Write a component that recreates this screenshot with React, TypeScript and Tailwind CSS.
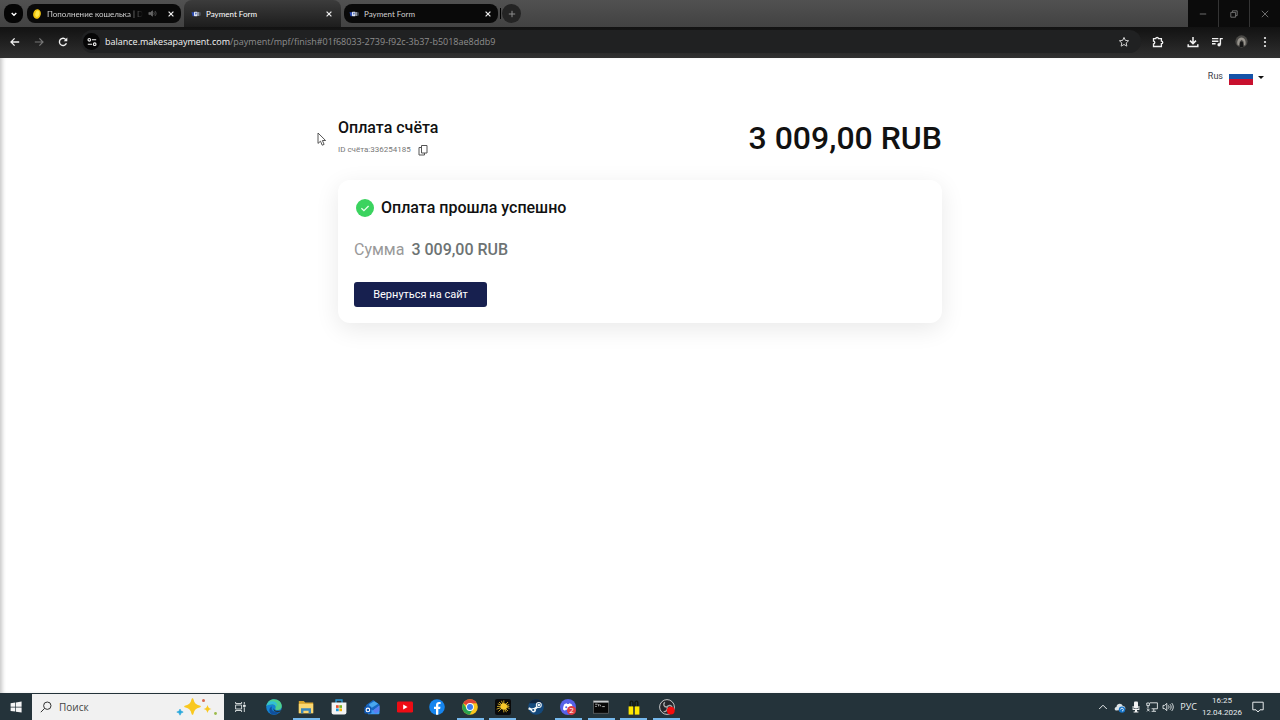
import { useState } from "react";
import type { ReactNode } from "react";

type TabInfo = { id: number; title: string; kind: "coin" | "pay"; audio?: boolean };

const TABS: TabInfo[] = [
  { id: 1, title: "Пополнение кошелька | D", kind: "coin", audio: true },
  { id: 2, title: "Payment Form", kind: "pay" },
  { id: 3, title: "Payment Form", kind: "pay" },
];

function Favicon({ kind }: { kind: TabInfo["kind"] }) {
  if (kind === "coin") {
    return (
      <svg viewBox="0 0 10 10" className="size-[10px] shrink-0">
        <ellipse cx="5" cy="5" rx="3.8" ry="4.9" fill="#f2c50f" transform="rotate(12 5 5)" />
        <ellipse cx="5.3" cy="4.7" rx="2" ry="3.2" fill="#ffe84a" transform="rotate(12 5 5)" />
      </svg>
    );
  }
  return (
    <svg viewBox="0 0 10 10" className="size-[10px] shrink-0">
      <path d="M0.5 3.2h2.6v4H1.6z" fill="#2c4cb4" />
      <rect x="3" y="2.8" width="3.6" height="4.4" rx="0.6" fill="#dfe6f5" />
      <path d="M4 3.8h1.8L4.9 6.3z" fill="#3350a8" />
      <rect x="6.8" y="3" width="1.6" height="4" fill="#8b93a0" />
      <rect x="8.7" y="3.4" width="0.9" height="3.2" fill="#596270" />
    </svg>
  );
}

function CloseIcon() {
  return (
    <svg viewBox="0 0 8 8" className="size-2" stroke="currentColor" strokeWidth="1.2">
      <path d="M1.6 1.6l4.8 4.8M6.4 1.6L1.6 6.4" />
    </svg>
  );
}

function Tab({ tab, active, onSelect }: { tab: TabInfo; active: boolean; onSelect: () => void }) {
  return (
    <div
      className={
        active
          ? "flex h-[27px] w-[157px] shrink-0 items-center rounded-t-lg bg-linear-to-b from-[#3c3c3c] to-[#1d1d1d] pr-[8px] pl-[7px] text-white"
          : "mt-[4px] mb-[4px] flex h-[19px] w-[154px] shrink-0 items-center rounded-lg bg-[#090909] pr-[6px] pl-[5px] text-[#d0d0d0]"
      }
    >
      <button type="button" onClick={onSelect} className="flex min-w-0 flex-1 items-center gap-[5px]">
        <Favicon kind={tab.kind} />
        <span className={tab.audio ? "mask-r-from-85% text-left whitespace-nowrap" : "whitespace-nowrap"}>
          {tab.title}
        </span>
        {tab.audio && (
          <svg viewBox="0 0 10 10" className="size-[9px] shrink-0" fill="none" stroke="#666" strokeWidth="0.9">
            <path d="M1 3.8v2.4h1.8L5 8V2L2.8 3.8z" fill="#666" />
            <path d="M6.3 3.5c.9.9.9 2.1 0 3M7.7 2.3c1.6 1.6 1.6 3.8 0 5.4" />
          </svg>
        )}
      </button>
      <button type="button" aria-label="Закрыть вкладку" className="text-[#eeeeee]">
        <CloseIcon />
      </button>
    </div>
  );
}

function TabStrip() {
  const [current, setCurrent] = useState(2);

  return (
    <div className="flex h-[27px] items-start bg-linear-to-b from-[#515151] to-[#424242] pl-[4px] font-[Lato,sans-serif] text-[8px]">
      <button
        type="button"
        aria-label="Поиск вкладок"
        className="mt-[4px] mr-[4px] flex size-[19px] items-center justify-center rounded-lg bg-[#050505] text-white"
      >
        <svg viewBox="0 0 8 8" className="size-2" fill="none" stroke="currentColor" strokeWidth="1.4">
          <path d="M1.7 2.9L4 5.2l2.3-2.3" />
        </svg>
      </button>
      <div className="flex min-w-0 items-start gap-[3px]">
        {TABS.map((t) => (
          <Tab key={t.id} tab={t} active={t.id === current} onSelect={() => setCurrent(t.id)} />
        ))}
      </div>
      <span className="mt-[8px] ml-[2px] h-[11px] w-px bg-black" />
      <button
        type="button"
        aria-label="Новая вкладка"
        className="mt-[4px] ml-px flex size-[19px] items-center justify-center rounded-full bg-[#242424] text-[#8d8d8d]"
      >
        <svg viewBox="0 0 8 8" className="size-2" stroke="currentColor">
          <path d="M4 .8v6.4M.8 4h6.4" />
        </svg>
      </button>
      <div className="ml-auto flex h-[27px] gap-px bg-[#343434] text-[#858585]">
        <button type="button" aria-label="Свернуть" className="flex w-[30px] items-center justify-center bg-[#0b0b0b]">
          <svg viewBox="0 0 8 8" className="size-2" stroke="currentColor" strokeWidth="0.8">
            <path d="M.8 4h6.4" />
          </svg>
        </button>
        <button type="button" aria-label="Развернуть" className="flex w-[30px] items-center justify-center bg-[#0b0b0b]">
          <svg viewBox="0 0 8 8" className="size-2" fill="none" stroke="currentColor" strokeWidth="0.8">
            <path d="M.8 2.4h4.8v4.8H.8zM2.4 2.2V.8h4.8v4.8H5.8" />
          </svg>
        </button>
        <button type="button" aria-label="Закрыть" className="flex w-[30px] items-center justify-center bg-[#0b0b0b]">
          <svg viewBox="0 0 8 8" className="size-2" stroke="currentColor" strokeWidth="0.8">
            <path d="M.8.8l6.4 6.4M7.2.8L.8 7.2" />
          </svg>
        </button>
      </div>
    </div>
  );
}

function Toolbar() {
  return (
    <div className="flex h-[31px] items-center bg-linear-to-b from-[#121212] to-[#303030] pr-[10px] pb-[2px] pl-[9px] text-[#f1f1f1]">
      <div className="flex w-[72px] items-center gap-[12px]">
        <button type="button" aria-label="Назад">
          <svg viewBox="0 0 12 12" className="size-3" fill="none" stroke="currentColor" strokeWidth="1.3">
            <path d="M10.2 6H2.2M5.6 2.4L2 6l3.6 3.6" />
          </svg>
        </button>
        <button type="button" aria-label="Вперёд" className="text-[#777777]">
          <svg viewBox="0 0 12 12" className="size-3" fill="none" stroke="currentColor" strokeWidth="1.2">
            <path d="M1.8 6h8M6.4 2.4L10 6 6.4 9.6" />
          </svg>
        </button>
        <button type="button" aria-label="Обновить">
          <svg viewBox="0 0 12 12" className="size-3" fill="none" stroke="currentColor" strokeWidth="1.4">
            <path d="M9.4 7.2A3.6 3.6 0 1 1 8.8 3.6" />
            <path d="M10.3 1.6v3.6H6.7z" fill="currentColor" stroke="none" />
          </svg>
        </button>
      </div>
      <div className="flex h-[23px] min-w-0 flex-1 items-center rounded-full bg-[#202122] pr-[11px] pl-[2px]">
        <button
          type="button"
          aria-label="Сведения о сайте"
          className="mr-[5px] flex size-[17px] shrink-0 items-center justify-center rounded-full bg-[#060606]"
        >
          <svg viewBox="0 0 10 10" className="size-[10px]" fill="none" stroke="currentColor" strokeWidth="1.1">
            <circle cx="2.3" cy="2.8" r="1.3" />
            <path d="M4.9 2.8h4.3M.8 7.2h4.3" />
            <circle cx="7.7" cy="7.2" r="1.3" />
          </svg>
        </button>
        <a href="#" className="flex-1 truncate text-[9px] leading-3 text-[#8e8e8e]">
          <span className="text-[#f4f4f4]">balance.makesapayment.com</span>
          /payment/mpf/finish#01f68033-2739-f92c-3b37-b5018ae8ddb9
        </a>
        <button type="button" aria-label="Добавить в закладки" className="text-[#d0d0d0]">
          <svg viewBox="0 0 12 12" className="size-3" fill="none" stroke="currentColor">
            <path d="M6 1.4l1.35 3 3.25.35-2.4 2.2.65 3.2L6 8.5l-2.85 1.65.65-3.2-2.4-2.2 3.25-.35z" />
          </svg>
        </button>
      </div>
      <div className="flex items-center gap-[12px] pl-[11px]">
        <button type="button" aria-label="Расширения" className="mr-[11px]">
          <svg viewBox="0 0 12 12" className="size-3" fill="none" stroke="currentColor" strokeWidth="1.3">
            <path d="M1.5 2.6h2.3c0-1.6 2.6-1.6 2.6 0h3v2.6c1.8 0 1.8 2.4 0 2.4v2.9H1.5V8c1.7-.2 1.7-2.6 0-2.8z" />
          </svg>
        </button>
        <button type="button" aria-label="Загрузки">
          <svg viewBox="0 0 12 12" className="size-3" fill="none" stroke="currentColor" strokeWidth="1.5">
            <path d="M6 1v6.2M3 4.6l3 3 3-3M1.2 8.2v2.4h9.6V8.2" />
          </svg>
        </button>
        <button type="button" aria-label="Управление медиа">
          <svg viewBox="0 0 12 12" className="size-3" fill="none" stroke="currentColor" strokeWidth="1.4">
            <path d="M1 2.6h6.4M1 5.2h6.4M1 7.8h3.6M9.4 8.6V2.6h2.4" />
            <circle cx="8.1" cy="8.8" r="1.7" fill="currentColor" stroke="none" />
          </svg>
        </button>
        <button type="button" aria-label="Профиль">
          <svg viewBox="0 0 14 14" className="size-[13px]">
            <circle cx="7" cy="7" r="6.6" fill="#4a4946" />
            <path d="M3 11c-1.6-4 .4-8.4 4-8.4s5.4 4.4 4 8.4l-2 .4.4-4.2L7.2 5 5 7.2l.4 4z" fill="#99958e" />
            <path d="M5.2 13c-.8-3 0-6 1.8-6s2.6 3 1.8 6z" fill="#161616" />
          </svg>
        </button>
        <button type="button" aria-label="Меню" className="flex w-[10px] justify-center">
          <svg viewBox="0 0 4 12" className="h-3 w-1" fill="currentColor">
            <circle cx="2" cy="2" r="1.1" />
            <circle cx="2" cy="6" r="1.1" />
            <circle cx="2" cy="10" r="1.1" />
          </svg>
        </button>
      </div>
    </div>
  );
}

function PaymentPage() {
  return (
    <main className="relative flex-1 bg-white font-[Roboto,sans-serif] shadow-[inset_4px_0_4px_-2px_#c4c4c4]">
      <div className="flex h-[38px] items-center justify-end pr-[16px]">
        <button type="button" className="flex items-center text-[9px] text-[#3c4048]">
          Rus
          <svg viewBox="0 0 24 14" className="mt-[2px] ml-[6px] h-[14px] w-6">
            <path d="M0 0h24v4H0z" fill="#ffffff" />
            <path d="M0 3h24v6H0z" fill="#1553a8" />
            <path d="M0 8h24v6H0z" fill="#c8102e" />
          </svg>
          <svg viewBox="0 0 6 3" className="ml-[5px] h-[3px] w-[6px]" fill="#111111">
            <path d="M0 0h6L3 3z" />
          </svg>
        </button>
      </div>

      <div className="mx-auto w-full max-w-[604px] pt-[20px]">
        <header className="flex items-center justify-between">
          <div>
            <h1 className="text-[16px] leading-6 font-medium text-[#111111]">Оплата счёта</h1>
            <div className="mt-[2px] mb-[2px] flex h-4 items-center gap-[7px] text-[8px] text-[#777777]">
              <span>ID счёта:336254185</span>
              <button type="button" aria-label="Скопировать">
                <svg viewBox="0 0 10 12" className="h-3 w-[10px]" fill="none" stroke="#555555">
                  <path d="M3.5 1.5H9V9H3.5z" />
                  <path d="M3.5 3.5H1V11h5.5V9" />
                </svg>
              </button>
            </div>
          </div>
          <p className="text-[32px] leading-10 font-medium text-[#111111]">3 009,00 RUB</p>
        </header>

        <section className="mt-[20px] rounded-xl bg-white px-4 pt-[16px] pb-[16px] shadow-[0_6px_24px_rgba(0,0,0,0.09)]">
          <h2 className="flex h-6 items-center text-[16px] leading-6 font-medium text-[#111111]">
            <svg viewBox="0 0 18 18" className="mr-[7px] ml-[2px] size-[18px]">
              <circle cx="9" cy="9" r="9" fill="#3bd35f" />
              <path d="M5.4 9.3l2.5 2.4 4.7-4.7" fill="none" stroke="#e9ffed" strokeWidth="1.3" />
            </svg>
            Оплата прошла успешно
          </h2>
          <p className="mt-[18px] flex gap-[7px] text-[16px] leading-6 text-[#999999]">
            Сумма <span className="font-medium text-[#6d7373]">3 009,00 RUB</span>
          </p>
          <button
            type="button"
            className="mt-[20px] block h-[25px] w-[133px] rounded-[3px] bg-[#17204f] pt-px text-[11px] text-white"
          >
            Вернуться на сайт
          </button>
        </section>
      </div>

      <svg viewBox="0 0 10 15" className="absolute top-[74px] left-[317px] h-[15px] w-[10px]">
        <path
          d="M1 1v10.4l2.5-2.2 1.7 4 1.9-.8-1.7-3.9h3.2z"
          fill="#ffffff"
          stroke="#444444"
          strokeWidth="0.9"
        />
      </svg>
    </main>
  );
}

type TaskbarApp = { name: string; open?: boolean; icon: ReactNode };

const APPS: TaskbarApp[] = [
  {
    name: "Edge",
    icon: (
      <>
        <circle cx="8" cy="8" r="7.8" fill="#1583d2" />
        <path d="M.4 7C1.2 2.6 4.4.2 8 .2c4.6 0 7.8 3.2 7.8 6.8 0 2.6-2 4-4.2 4-2 0-2.8-.8-2.2-1.6C10.4 7.6 9 5.2 6.2 5.2 3.4 5.2 1.2 6 .4 7z" fill="#4fd08d" />
        <path d="M.4 7C1.4 3.2 4.2 1.8 7 2.2c3.4.4 4.8 3 3.8 5.4C10 5.8 8.4 5 6.4 5 3.8 5 1.4 5.8.4 7z" fill="#32bfd8" />
        <path d="M6 7.4c-1.6 3.6 1.6 7 8 4.6-2 3.4-6 4.4-8.6 3C2.2 12.8 3 8.4 6 7.4z" fill="#10509e" />
        <path d="M7.6 9c.4 2.6 3.6 3.8 7.6 1.9l-.9 1.6c-4 1.4-7.4 0-6.7-3.5z" fill="#24333a" />
      </>
    ),
  },
  {
    name: "Проводник",
    open: true,
    icon: (
      <>
        <path d="M.8 2h5l1.4 1.6h8v10.6H.8z" fill="#d9a52d" />
        <path d="M.8 4.8h14.4v9.4H.8z" fill="#fbd771" />
        <path d="M3 9.2h10v5h-2.4v-2.4H5.4v2.4H3z" fill="#3a86bd" />
      </>
    ),
  },
  {
    name: "Microsoft Store",
    icon: (
      <>
        <path d="M5 4V1h6v3" fill="none" stroke="#2b9bd8" strokeWidth="1.3" />
        <path d="M.6 3.6h14.8v9.8a2 2 0 0 1-2 2H2.6a2 2 0 0 1-2-2z" fill="#f4f4f4" />
        <path d="M5 6.2h2.7v2.7H5z" fill="#e8502d" />
        <path d="M8.3 6.2H11v2.7H8.3z" fill="#78b322" />
        <path d="M5 9.5h2.7v2.7H5z" fill="#1a9be0" />
        <path d="M8.3 9.5H11v2.7H8.3z" fill="#f4b400" />
      </>
    ),
  },
  {
    name: "Outlook",
    icon: (
      <>
        <path d="M2.2 6L9.2 1l6.2 4.4v8.8H2.6z" fill="#1767c2" />
        <path d="M5 5.2l5.2-3 4 2.6-7.6 4.6z" fill="#49a7ee" />
        <path d="M3 8l6 3.4 6.4-4.8v7.6a1 1 0 0 1-1 1H4z" fill="#3f9af2" />
        <path d="M9 11.4l6.4-4.8v5.2l-4 3z" fill="#5b7df0" />
        <rect x="0.4" y="7.4" width="7" height="7" rx="1.2" fill="#0f58b4" />
        <circle cx="3.9" cy="10.9" r="1.8" fill="none" stroke="#ffffff" strokeWidth="1.1" />
      </>
    ),
  },
  {
    name: "YouTube",
    icon: (
      <>
        <rect x="0" y="2.6" width="16" height="11" rx="1.4" fill="#ee0c14" />
        <path d="M6.2 5.6v5l4.4-2.5z" fill="#ffffff" />
      </>
    ),
  },
  {
    name: "Facebook",
    icon: (
      <>
        <circle cx="8" cy="8" r="7.8" fill="#1685ee" />
        <path d="M7 15.7V10H5V7.8h2V6c0-2 1.2-3.1 3-3.1l1.6.1v2h-1c-1 0-1.3.5-1.3 1.2v1.6h2.2L11.1 10H9.3v5.7z" fill="#ffffff" />
      </>
    ),
  },
  {
    name: "Chrome",
    open: true,
    icon: (
      <>
        <circle cx="8" cy="8" r="7.8" fill="#f8c51c" />
        <path d="M8 8L1.2 4.2A7.8 7.8 0 0 1 14.8 4.2L8 4.4z" fill="#df4437" />
        <path d="M1.2 4.2A7.8 7.8 0 0 0 7.6 15.8L11 9.8 8 8 4.8 9.8z" fill="#2aa450" />
        <circle cx="8" cy="8" r="3.9" fill="#ffffff" />
        <circle cx="8" cy="8" r="3" fill="#3c7df0" />
      </>
    ),
  },
  {
    name: "Sun",
    open: true,
    icon: (
      <>
        <rect width="16" height="16" rx="2" fill="#090909" />
        <circle cx="8.8" cy="7.4" r="3.2" fill="#f7c92c" />
        <path d="M8.8 1.4v12M2 7.4h12.4M4 3l9 9M13 3l-9.6 9.6M6.4 1.8l5 11.4M2.8 4.8l11.6 4.6M1.6 10.2l12.6-4.6" stroke="#f7c92c" strokeWidth="0.8" />
      </>
    ),
  },
  {
    name: "Steam",
    icon: (
      <>
        <circle cx="8" cy="8" r="7.8" fill="#14497c" />
        <path d="M1.2 4.2A7.8 7.8 0 0 1 14.8 4.2z" fill="#10253f" />
        <path d="M.6 9.2l4.4 2 3-2.4L12 6" fill="none" stroke="#f1f5f7" strokeWidth="2.2" />
        <circle cx="10.8" cy="6" r="3" fill="#f1f5f7" />
        <circle cx="10.8" cy="6" r="1.9" fill="#14497c" />
        <circle cx="10.8" cy="6" r="1.3" fill="#f1f5f7" />
        <circle cx="5.6" cy="11.2" r="2.3" fill="#f1f5f7" />
        <circle cx="5.2" cy="11" r="1.1" fill="#14497c" />
      </>
    ),
  },
  {
    name: "Discord",
    open: true,
    icon: (
      <>
        <circle cx="8" cy="8" r="8" fill="#5661e8" />
        <path d="M3 10.6C3 7.8 4 5.6 4.6 5l2.2-.8.4.8h1.6l.4-.8 2.2.8c.6.6 1.6 2.8 1.6 5.6L11 11.8l-.8-1H5.8l-.8 1z" fill="#ffffff" />
        <circle cx="6.2" cy="8.2" r="1" fill="#5661e8" />
        <circle cx="11.5" cy="11.4" r="4.5" fill="#e13d43" />
        <text x="11.5" y="14" textAnchor="middle" fontSize="8" fill="#ffffff">2</text>
      </>
    ),
  },
  {
    name: "Командная строка",
    open: true,
    icon: (
      <>
        <rect x="0.5" y="1.8" width="15" height="12.4" fill="#080808" stroke="#777777" strokeWidth="0.6" />
        <path d="M.5 1.8h15v1.8H.5z" fill="#c9cdd0" />
        <path d="M2.2 5.2h2.4M2.2 7.4h1.6M5.6 5.2v2.2M6.8 5.4l1 2M9.2 7.6h2.6" stroke="#d8d8d8" strokeWidth="0.8" />
      </>
    ),
  },
  {
    name: "Binoculars",
    open: true,
    icon: (
      <>
        <path d="M4.2 8V3.6c0-2 2.6-2 2.8 0V8M9 8V3.6c.2-2 2.8-2 2.8 0V8" fill="none" stroke="#11170f" strokeWidth="1.4" />
        <rect x="2.6" y="7.4" width="4.6" height="8.2" fill="#ffe800" />
        <rect x="8.8" y="7.4" width="4.6" height="8.2" fill="#ffe800" />
      </>
    ),
  },
  {
    name: "OBS",
    open: true,
    icon: (
      <>
        <circle cx="8" cy="8" r="7.4" fill="#25262a" stroke="#d7d7d7" strokeWidth="0.9" />
        <path d="M7.8 8C4.6 8 4 5 5.8 3.2M8 8c1.8-2.6 4.8-1.6 5.2.6M8 8c1.2 2.6-.8 5-3.4 4.6" fill="none" stroke="#a9a9a9" strokeWidth="1.4" />
        <circle cx="11.8" cy="11.6" r="3.9" fill="#f50d0d" />
      </>
    ),
  },
];

function SearchBox() {
  return (
    <label className="flex h-[26px] w-[192px] shrink-0 items-center bg-[#f1f1f1] pr-[6px] pl-[8px] text-[#333333]">
      <svg viewBox="0 0 12 12" className="size-3 shrink-0" fill="none" stroke="currentColor">
        <circle cx="7.3" cy="4.7" r="3.7" />
        <path d="M4.6 7.4L.8 11.2" />
      </svg>
      <input
        aria-label="Поиск"
        placeholder="Поиск"
        className="ml-[7px] min-w-0 flex-1 bg-transparent pt-px text-[10px] outline-none placeholder:text-[#444444]"
      />
      <svg viewBox="0 0 42 18" className="h-[18px] w-[42px] shrink-0">
        <path d="M16.5 1c1.3 5 2.5 6.2 7.5 7.5-5 1.3-6.2 2.5-7.5 7.5-1.3-5-2.5-6.2-7.5-7.5 5-1.3 6.2-2.5 7.5-7.5z" fill="#f9c81f" stroke="#f9c81f" strokeWidth="1.6" strokeLinejoin="round" />
        <path d="M31.5 7c.7 2.6 1.3 3.2 4 4-2.7.7-3.3 1.4-4 4-.7-2.6-1.3-3.3-4-4 2.7-.8 3.3-1.4 4-4z" fill="#f9c81f" />
        <path d="M4 11l1 2.1 2.2 1-2.2.9-1 2.2-.9-2.2-2.3-.9 2.3-1z" fill="#28a8dc" stroke="#28a8dc" strokeWidth="0.6" />
        <circle cx="27.5" cy="2.5" r="1.5" fill="#d9694c" />
        <circle cx="39.5" cy="15.5" r="1.4" fill="#9bbb4a" />
      </svg>
    </label>
  );
}

function Tray() {
  return (
    <div className="ml-auto flex items-center text-[#e8eced]">
      <button type="button" aria-label="Скрытые значки" className="mr-[6px]">
        <svg viewBox="0 0 10 10" className="size-[10px]" fill="none" stroke="currentColor">
          <path d="M1.2 7L5 3.2 8.8 7" />
        </svg>
      </button>
      <svg viewBox="0 0 12 12" className="mr-[4px] size-3">
        <path d="M2.6 9.6C0 9.4.2 6.2 2.4 6 2.8 2.2 7.6 1.6 8.8 5c2 0 3 1.6 2.4 3.4z" fill="#dce3e6" />
        <circle cx="8" cy="8.6" r="3.2" fill="#1675ca" />
        <path d="M6.6 8.6a1.4 1.4 0 1 1 1.4 1.4" fill="none" stroke="#ffffff" strokeWidth="0.8" />
      </svg>
      <svg viewBox="0 0 12 12" className="mr-[4px] size-3" fill="#f3f3f3">
        <rect x="4" y="0.4" width="4" height="7" rx="1" />
        <path d="M2.6 5h1v3h4.8V5h1v4H7v1.6h1.4v1H3.6v-1H5V9H2.6z" />
      </svg>
      <svg viewBox="0 0 12 12" className="mr-[4px] size-3" fill="none" stroke="currentColor" strokeWidth="0.9">
        <path d="M4 1.8h7.4v6H5.6M7.8 7.8v2.4M5.6 10.3h4.4M.8 2h2.6v2.6H.8zM2 4.6v3M1 7.8l2.6 2.6M3.6 7.8L1 10.4" />
      </svg>
      <svg viewBox="0 0 12 12" className="mr-[6px] size-3" fill="none" stroke="currentColor" strokeWidth="0.9">
        <path d="M1 4.4v3.2h1.6l2.2 2V2.4l-2.2 2zM6.4 4.4c.8.9.8 2.3 0 3.2M8 3.2c1.5 1.6 1.5 4 0 5.6M9.6 2c2.2 2.2 2.2 5.8 0 8" />
      </svg>
      <button type="button" className="mr-[6px] text-[9px]">РУС</button>
      <div className="flex w-[38px] flex-col items-center font-[Roboto,sans-serif] text-[8px] leading-3 whitespace-nowrap">
        <p>16:25</p>
        <p>12.04.2026</p>
      </div>
      <button type="button" aria-label="Уведомления" className="mr-[16px] ml-[11px]">
        <svg viewBox="0 0 12 12" className="size-3" fill="none" stroke="currentColor">
          <path d="M.8 1.2h10.4v7.6H8L6 11 4 8.8H.8z" />
        </svg>
      </button>
    </div>
  );
}

function Taskbar() {
  return (
    <footer className="flex h-[27px] items-center bg-[#24333a] font-[Open_Sans,Noto_Sans,sans-serif]">
      <button type="button" aria-label="Пуск" className="flex w-8 shrink-0 items-center justify-center">
        <svg viewBox="0 0 12 12" className="size-3" fill="#f5f5f5">
          <path d="M.6 2.2l4.7-.7v4.2H.6zM6 1.4l5.6-.9v5.2H6zM.6 6.4h4.7v4.2l-4.7-.7zM6 6.4h5.6v5.2L6 10.7z" />
        </svg>
      </button>
      <SearchBox />
      <button type="button" aria-label="Представление задач" className="flex w-8 shrink-0 items-center justify-center">
        <svg viewBox="0 0 12 12" className="size-3" fill="none" stroke="#e2e6e7" strokeWidth="0.9">
          <path d="M1.6 4h6v4h-6zM1.6 1v1.5h6V1M1.6 11V9.5h6V11M10.3 1v2M10.3 6.5V11" />
          <path d="M9.5 4h1.7v1.7H9.5z" fill="#e2e6e7" />
        </svg>
      </button>
      <nav className="ml-[4px] flex h-[27px] w-[420px] justify-between">
        {APPS.map((app) => (
          <button
            key={app.name}
            type="button"
            aria-label={app.name}
            className={
              app.open
                ? "flex w-[27px] items-center justify-center border-b-2 border-[#76b9ed] pt-[2px]"
                : "flex w-[27px] items-center justify-center border-b-2 border-transparent pt-[2px]"
            }
          >
            <svg viewBox="0 0 16 16" className="size-4">
              {app.icon}
            </svg>
          </button>
        ))}
      </nav>
      <Tray />
    </footer>
  );
}

export default function App() {
  return (
    <div className="flex min-h-screen flex-col bg-white">
      <div className="font-[Open_Sans,Noto_Sans,sans-serif] leading-3">
        <TabStrip />
        <Toolbar />
      </div>
      <PaymentPage />
      <Taskbar />
    </div>
  );
}
